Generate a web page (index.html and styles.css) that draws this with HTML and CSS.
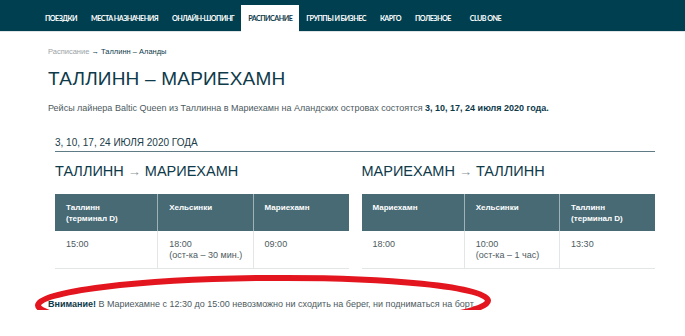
FILE: index.html
```html
<!DOCTYPE html>
<html>
<head>
  <title>Таллинн – Мариехамн</title>
  <link rel="stylesheet" href="styles.css">
</head>
<body>
  <header class="topnav">
    <ul class="menu">
      <li><a href="#">Поездки</a></li>
      <li><a href="#">Места назначения</a></li>
      <li><a href="#">Онлайн-шопинг</a></li>
      <li class="active"><a href="#">Расписание</a></li>
      <li><a href="#">Группы и бизнес</a></li>
      <li><a href="#">Карго</a></li>
      <li><a href="#">Полезное</a></li>
      <li class="club"><a href="#">Club One</a></li>
    </ul>
  </header>

  <main class="page">
    <div class="crumbs"><a href="#">Расписание</a> → <span>Таллинн – Аланды</span></div>
    <h1>ТАЛЛИНН – МАРИЕХАМН</h1>
    <p class="lead">Рейсы лайнера Baltic Queen из Таллинна в Мариехамн на Аландских островах состоятся <b>3, 10, 17, 24 июля 2020 года.</b></p>

    <section class="sched">
      <h3 class="sched-date">3, 10, 17, 24 ИЮЛЯ 2020 ГОДА</h3>
      <div class="routes">
        <div class="route">
          <h2>ТАЛЛИНН <span class="arr">→</span> МАРИЕХАМН</h2>
          <table>
            <colgroup><col class="c-first"><col><col></colgroup>
            <tr>
              <th>Таллинн<br>(терминал D)</th>
              <th>Хельсинки</th>
              <th>Мариехамн</th>
            </tr>
            <tr>
              <td>15:00</td>
              <td>18:00<br>(ост-ка – 30 мин.)</td>
              <td>09:00</td>
            </tr>
          </table>
        </div>
        <div class="route">
          <h2>МАРИЕХАМН <span class="arr">→</span> ТАЛЛИНН</h2>
          <table>
            <colgroup><col class="c-first"><col><col></colgroup>
            <tr>
              <th>Мариехамн</th>
              <th>Хельсинки</th>
              <th>Таллинн<br>(терминал D)</th>
            </tr>
            <tr>
              <td>18:00</td>
              <td>10:00<br>(ост-ка – 1 час)</td>
              <td>13:30</td>
            </tr>
          </table>
        </div>
      </div>
    </section>

    <p class="note"><b>Внимание!</b> В Мариехамне с 12:30 до 15:00 невозможно ни сходить на берег, ни подниматься на борт.</p>

    <!-- hand-drawn marker round the note -->
    <svg class="marker" width="685" height="336" viewBox="0 0 685 336">
      <ellipse cx="263" cy="303" rx="225" ry="25" transform="rotate(-0.6 263 303)" />
    </svg>
  </main>
</body>
</html>
```

FILE: styles.css
```css
body {
  margin: 0;
  font-family: "Liberation Sans", Arial, sans-serif;
  background-color: #fff;
  color: #4d5a60;
}

.topnav {
  background-color: #003f4f;
  height: 31px;
  border-bottom: 1px solid #dfe3e5;
}

.menu {
  list-style: none;
  margin: 0;
  padding: 5px 0 0 38px;
  display: flex;
  height: 26px;
}

.menu li a {
  display: block;
  padding: 0 7px;
  height: 27px;
  line-height: 28px;
  color: #fff;
  text-decoration: none;
  text-transform: uppercase;
  font-family: Lato, "Liberation Sans", sans-serif;
  font-weight: bold;
  font-size: 7.2px;
  letter-spacing: -0.55px;
}

.menu li.active a {
  background-color: #fff;
  color: #0e3a4a;
}

.menu li.club a {
  margin-left: 5px;
}

.page {
  position: relative;
  padding: 15px 23px 0 48px;
}

.crumbs {
  font-size: 7.5px;
  line-height: 10px;
  color: #0e3a4a;
}

.crumbs a {
  color: #9aa3a7;
  text-decoration: none;
}

h1 {
  margin: 11px 0 0;
  font-size: 19px;
  line-height: 22px;
  font-weight: normal;
  color: #0e3a4a;
  letter-spacing: 0.2px;
}

.lead {
  margin: 12px 0 0;
  font-size: 9px;
  line-height: 12px;
}

.lead b {
  color: #0e3a4a;
}

.sched {
  margin: 22px 7px 0;
}

.sched-date {
  margin: 0;
  font-size: 10px;
  line-height: 13px;
  font-weight: normal;
  color: #1b3c48;
  padding-bottom: 2px;
  border-bottom: 1px solid #5f7c86;
}

.routes {
  display: flex;
  gap: 13px;
}

.route {
  flex: 1;
}

.route h2 {
  margin: 10px 0 0;
  font-size: 14.5px;
  line-height: 18px;
  font-weight: normal;
  color: #0e3a4a;
}

.arr {
  color: #8a9599;
  font-size: 13px;
}

table {
  margin-top: 13px;
  width: 100%;
  border-collapse: collapse;
  table-layout: fixed;
}

.c-first {
  width: 35%;
}

th {
  background-color: #476a75;
  color: #fff;
  font-size: 8px;
  line-height: 11px;
  text-align: left;
  vertical-align: top;
  padding: 8px 11px 7px;
  height: 22px;
  border-left: 1px solid #9fb2b8;
}

td {
  font-size: 9px;
  line-height: 11px;
  vertical-align: top;
  white-space: nowrap;
  padding: 8px 11px 7px;
  height: 22px;
  border-left: 1px solid #e2e6e7;
  border-bottom: 1px solid #e2e6e7;
}

th:first-child,
td:first-child {
  border-left: none;
}

.note {
  margin: 29px 0 0;
  font-size: 9px;
  line-height: 12px;
}

.note b {
  color: #0e3a4a;
}

.marker {
  position: absolute;
  top: -32px;
  left: 0;
  pointer-events: none;
}

.marker ellipse {
  fill: none;
  stroke: #e3161f;
  stroke-width: 6;
}
```
